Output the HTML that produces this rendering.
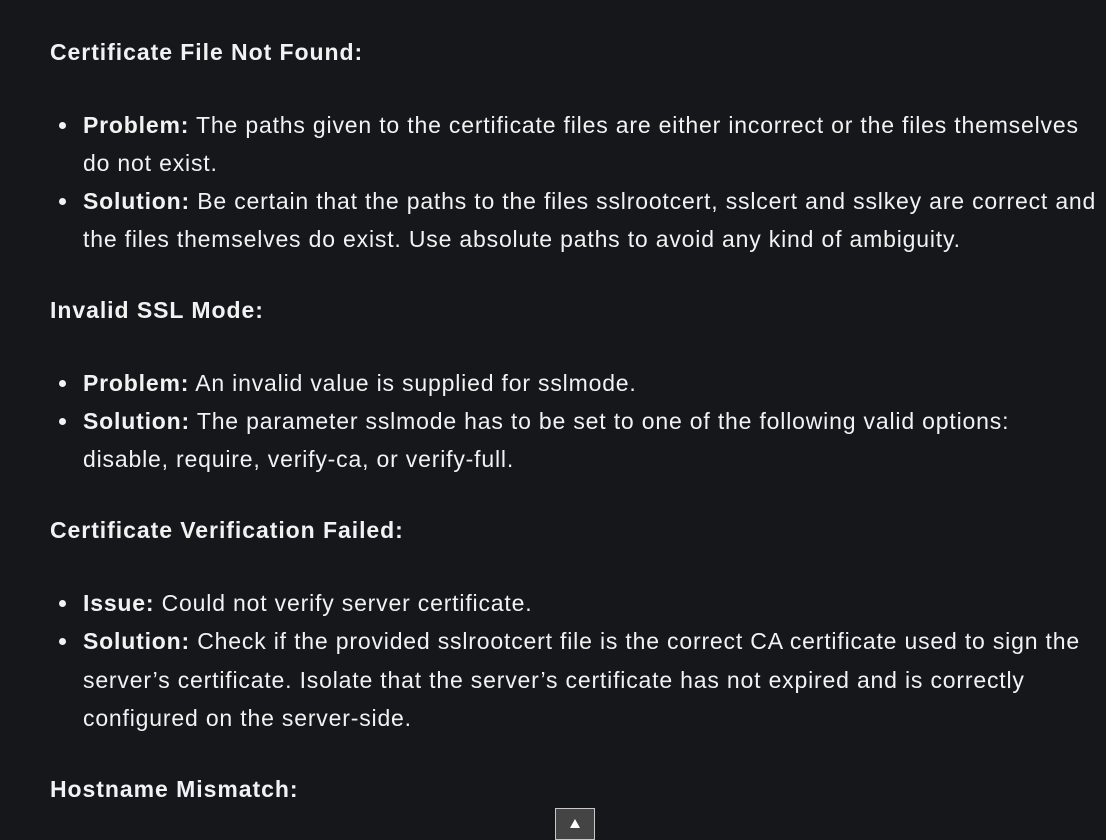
<!DOCTYPE html>
<html><head><meta charset="utf-8"><style>
html,body{margin:0;padding:0}
body{width:1106px;height:826px;background:#16171b;color:#f2f2f2;font-family:"Liberation Sans",sans-serif;font-size:23px;letter-spacing:0.82px;position:relative;overflow:hidden}
.l{position:absolute;left:83px;height:38px;line-height:38px;white-space:nowrap}
.h{left:50px;font-weight:bold;letter-spacing:0.95px}
.b::before{content:"";position:absolute;left:-24px;top:16px;width:7px;height:7px;border-radius:50%;background:#f2f2f2}
b{font-weight:bold}
.btn{position:absolute;left:555px;top:808px;width:38px;height:30px;background:#444;border:1px solid #c8c8c8}
.btn::after{content:"";position:absolute;left:14px;top:10px;border-left:5px solid transparent;border-right:5px solid transparent;border-bottom:9px solid #fff}
</style></head><body>
<div class="l h" style="top:33px">Certificate File Not Found:</div>
<div class="l b" style="top:106px"><b>Problem:</b> The paths given to the certificate files are either incorrect or the files themselves</div>
<div class="l" style="top:144px">do not exist.</div>
<div class="l b" style="top:182px"><b>Solution:</b> Be certain that the paths to the files sslrootcert, sslcert and sslkey are correct and</div>
<div class="l" style="top:220px">the files themselves do exist. Use absolute paths to avoid any kind of ambiguity.</div>
<div class="l h" style="top:291px">Invalid SSL Mode:</div>
<div class="l b" style="top:364px"><b>Problem:</b> An invalid value is supplied for sslmode.</div>
<div class="l b" style="top:402px"><b>Solution:</b> The parameter sslmode has to be set to one of the following valid options:</div>
<div class="l" style="top:440px">disable, require, verify-ca, or verify-full.</div>
<div class="l h" style="top:511px">Certificate Verification Failed:</div>
<div class="l b" style="top:584px"><b>Issue:</b> Could not verify server certificate.</div>
<div class="l b" style="top:622px"><b>Solution:</b> Check if the provided sslrootcert file is the correct CA certificate used to sign the</div>
<div class="l" style="top:661px">server’s certificate. Isolate that the server’s certificate has not expired and is correctly</div>
<div class="l" style="top:699px">configured on the server-side.</div>
<div class="l h" style="top:770px">Hostname Mismatch:</div>
<div class="btn"></div>
</body></html>
